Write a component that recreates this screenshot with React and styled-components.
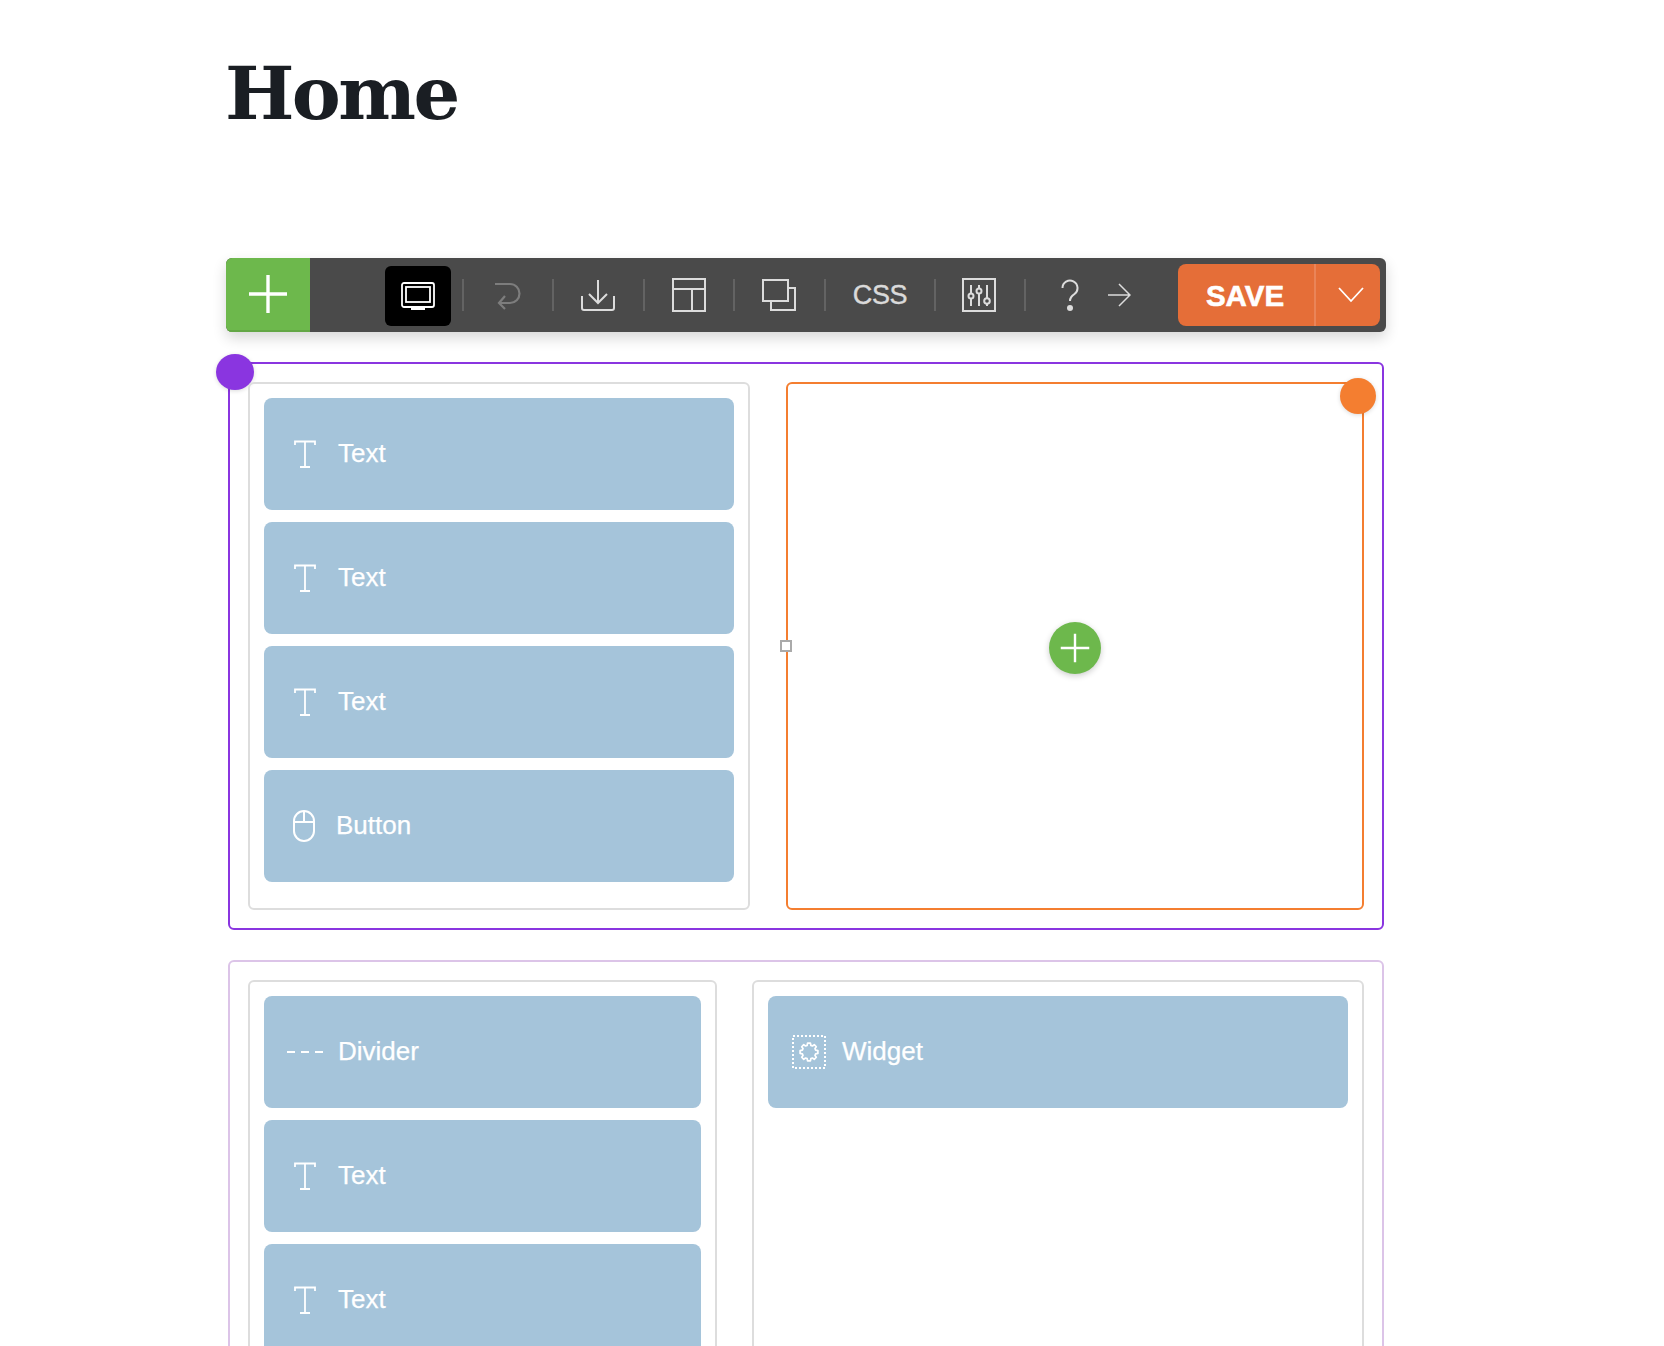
import React from "react";
import styled, { createGlobalStyle } from "styled-components";

const Global = createGlobalStyle`
  html, body { margin: 0; padding: 0; background: #fff; }
  #root { height: 1346px; overflow: hidden; }
  * { box-sizing: border-box; }
`;
const Page = styled.div`
  width: 1160px; margin-left: 226px; font-family: "Liberation Sans", Arial, sans-serif;
`;
const Title = styled.h1`
  margin: 0 0 0 -1px; height: 258px; padding-top: 47px;
  font: 700 73.500px/92px "DejaVu Serif", serif; letter-spacing: -2.600px; color: #1a1e23;
`;
const Toolbar = styled.div`
  height: 74px; display: flex; align-items: center; background: #4a4a4a; border-radius: 6px;
  box-shadow: 0 6px 14px rgba(0,0,0,.16); overflow: hidden; padding-right: 6px;
`;
const AddCell = styled.div`
  width: 84px; height: 74px; background: #6db84c; border-bottom: 2px solid #63a745;
  display: flex; align-items: center; justify-content: center; margin-right: 75px; flex: none;
`;
const ActiveTile = styled.div`
  width: 66px; height: 60px; background: #000; border-radius: 6px; display: flex;
  align-items: center; justify-content: center; margin: 2px 11px 0 0; flex: none;
`;
const Sep = styled.div`width: 2px; height: 32px; background: #636363; flex: none;`;
const Cell = styled.div`
  width: ${p => p.$w}px; flex: none; display: flex; align-items: center; justify-content: center;
  color: #dcdcdc; height: 60px; padding-right: ${p => p.$pr || 0}px;
`;
const CssLabel = styled.span`
  font-size: 27px; letter-spacing: -.4px; color: #dadada; -webkit-text-stroke: .4px #dadada;
`;
const SaveGroup = styled.div`
  margin-left: auto; width: 202px; height: 62px; display: flex; background: #e56e38; border-radius: 8px; flex: none;
`;
const SaveLabel = styled.div`
  width: 138px; border-right: 2px solid #ea8458; display: flex; align-items: center; justify-content: center;
  color: #fff; font-weight: 700; font-size: 29.500px; padding: 1px 2px 0 0; -webkit-text-stroke: .6px #fff;
`;
const SaveArrow = styled.div`flex: 1; display: flex; align-items: center; justify-content: center; padding-left: 6px;`;

const Section = styled.section`
  position: relative; margin: 30px 2px 0; border: 2px solid ${p => p.$c}; border-radius: 6px;
  padding: 18px; display: flex; gap: ${p => p.$gap}px;
`;
const Column = styled.div`
  position: relative; width: ${p => p.$w ? p.$w + "px" : "auto"}; flex: ${p => p.$w ? "none" : 1};
  border: 2px solid ${p => p.$c || "#ddd"}; border-radius: 6px; padding: 14px 14px 26px;
  display: flex; flex-direction: column; gap: 12px; min-height: 527px;
`;
const Item = styled.div`
  height: 112px; background: #a5c4da; border-radius: 8px; color: #fff; display: flex; align-items: center;
  padding-left: 23px; font-size: 26px; -webkit-text-stroke: .25px #fff; flex: none;
`;
const Slot = styled.div`
  width: 36px; height: 36px; flex: none; display: flex; align-items: center; justify-content: center;
`;
const ItemText = styled.span`margin-left: ${p => p.$ml}px; position: relative; top: -1px;`;
const Bubble = styled.div`
  position: absolute; border-radius: 50%; background: ${p => p.$c}; width: ${p => p.$w}px; height: ${p => p.$h}px;
  left: ${p => p.$l}; right: ${p => p.$r}; top: ${p => p.$t}px; box-shadow: 0 1px 4px rgba(0,0,0,.15);
`;
const Handle = styled.div`
  position: absolute; left: -8px; top: 256px; width: 12px; height: 12px; background: #fff; border: 2px solid #aaa;
`;
const AddButton = styled.div`
  position: absolute; left: 261px; top: 238px; width: 52px; height: 52px; border-radius: 50%;
  background: #6db84c; box-shadow: 0 2px 6px rgba(0,0,0,.2); display: flex; align-items: center; justify-content: center;
`;
const MouseWrap = styled.span`margin-right: 3px; display: flex;`;

const Plus = ({ s, w = 2 }) => (
  <svg width={s} height={s} viewBox="0 0 40 40"><path d="M20 1v38M1 20h38" stroke="#fff" strokeWidth={w} fill="none" /></svg>
);
const Ic = ({ w, h, children, c = "#dcdcdc", sw = 2 }) => (
  <svg width={w} height={h} viewBox={`0 0 ${w} ${h}`} fill="none" stroke={c} strokeWidth={sw}>{children}</svg>
);
const TextIcon = () => (
  <Ic w={22} h={28} c="#fff" sw={1.800}><path d="M1 5V1.500h20V5M11 1.500V27M6 27h10" /></Ic>
);
const MouseIcon = () => (
  <MouseWrap>
    <Ic w={22} h={32} c="#fff"><rect x="1" y="1" width="20" height="30" rx="10" /><path d="M1 12h20M11 1v11" /></Ic>
  </MouseWrap>
);
const DashIcon = () => (
  <Ic w={36} h={4} c="#fff"><path d="M0 2h8M14 2h8M28 2h8" /></Ic>
);
const gearPath = (() => {
  const pts = [];
  for (let i = 0; i < 8; i++) {
    const a = (i * Math.PI) / 4 - Math.PI / 2;
    [[-0.27, 6.900], [-0.16, 9], [0.16, 9], [0.27, 6.900]].forEach(([d, r]) => {
      pts.push(`${(17 + r * Math.cos(a + d)).toFixed(2)} ${(17 + r * Math.sin(a + d)).toFixed(2)}`);
    });
  }
  return "M" + pts.join("L") + "Z";
})();
const WidgetIcon = () => (
  <svg width="34" height="34" viewBox="0 0 34 34" fill="none" stroke="#fff">
    <rect x="1" y="1" width="32" height="32" strokeWidth="2" strokeDasharray="2 2" />
    <path strokeWidth="1.700" strokeLinejoin="round" d={gearPath} />
  </svg>
);

const Row = ({ icon, children, ml = 15 }) => (
  <Item><Slot>{icon}</Slot><ItemText $ml={ml}>{children}</ItemText></Item>
);

export default function App() {
  return (
    <Page>
      <Global />
      <Title>Home</Title>
      <Toolbar>
        <AddCell><Plus s={40} w={3.400} /></AddCell>
        <ActiveTile>
          <Ic w={34} h={28} c="#fff" sw={1.800}>
            <rect x="1" y="1" width="32" height="24" rx="2" /><rect x="5" y="5" width="24" height="15" /><path d="M10 27h14" />
          </Ic>
        </ActiveTile>
        <Sep />
        <Cell $w={88}>
          <Ic w={28} h={30} c="#7d7d7d" sw={2.200}><path d="M1 4h15a9.500 9.500 0 0 1 0 19H6M11 16l-6 7 6 6" /></Ic>
        </Cell>
        <Sep />
        <Cell $w={89} $pr={2}>
          <Ic w={34} h={32}><path d="M17 1v23M8 15l9 9 9-9M1 17v12a2 2 0 0 0 2 2h28a2 2 0 0 0 2-2V17" /></Ic>
        </Cell>
        <Sep />
        <Cell $w={88} $pr={1}>
          <Ic w={34} h={34}><rect x="1" y="1" width="32" height="32" /><path d="M1 11h32M20 11v22" /></Ic>
        </Cell>
        <Sep />
        <Cell $w={89} $pr={2}>
          <Ic w={34} h={32}><rect x="1" y="1" width="25" height="21" /><path d="M26 9h7v22H9v-9" /></Ic>
        </Cell>
        <Sep />
        <Cell $w={108}><CssLabel>CSS</CssLabel></Cell>
        <Sep />
        <Cell $w={88} $pr={2}>
          <Ic w={34} h={34}>
            <rect x="1" y="1" width="32" height="32" />
            <path d="M9 7v8M9 21v7M17 7v3M17 16v12M25 7v13M25 26v2" />
            <circle cx="9" cy="18" r="2.500" /><circle cx="17" cy="13" r="2.500" /><circle cx="25" cy="23" r="2.800" />
          </Ic>
        </Cell>
        <Sep />
        <Cell $w={88}>
          <svg width="18" height="32" viewBox="0 0 18 32" fill="none" stroke="#dcdcdc" strokeWidth="2">
            <path d="M1.500 9a7.500 7.500 0 1 1 12 6c-3 2.300-4.500 3.500-4.500 7" /><circle cx="9" cy="29" r="3" fill="#dcdcdc" stroke="none" />
          </svg>
        </Cell>
        <Cell $w={10}>
          <svg width="24" height="24" viewBox="0 0 24 24" style={{ flex: "none" }} fill="none" stroke="#dcdcdc" strokeWidth="1.500"><path d="M1 12h22M12 1l11 11-11 11" /></svg>
        </Cell>
        <SaveGroup>
          <SaveLabel>SAVE</SaveLabel>
          <SaveArrow>
            <svg width="26" height="16" viewBox="0 0 26 16" fill="none" stroke="#fff" strokeWidth="1.800"><path d="M1 1l12 13L25 1" /></svg>
          </SaveArrow>
        </SaveGroup>
      </Toolbar>

      <Section $c="#8a35e0" $gap={36}>
        <Bubble $c="#8a35e0" $w={38} $h={36} $l="-14px" $t={-10} />
        <Column $w={502}>
          <Row icon={<TextIcon />}>Text</Row>
          <Row icon={<TextIcon />}>Text</Row>
          <Row icon={<TextIcon />}>Text</Row>
          <Row icon={<MouseIcon />} ml={13}>Button</Row>
        </Column>
        <Column $c="#f47e30">
          <Handle />
          <Bubble $c="#f47e30" $w={36} $h={36} $r="-14px" $t={-6} />
          <AddButton><Plus s={30} w={3.200} /></AddButton>
        </Column>
      </Section>

      <Section $c="#dcc4e8" $gap={35}>
        <Column $w={469}>
          <Row icon={<DashIcon />}>Divider</Row>
          <Row icon={<TextIcon />}>Text</Row>
          <Row icon={<TextIcon />}>Text</Row>
        </Column>
        <Column>
          <Row icon={<WidgetIcon />}>Widget</Row>
        </Column>
      </Section>
    </Page>
  );
}
